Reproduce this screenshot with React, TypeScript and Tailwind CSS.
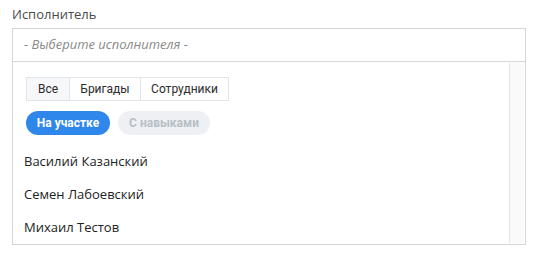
import { useState } from "react";

const tabs = ["Все", "Бригады", "Сотрудники"];
const people = ["Василий Казанский", "Семен Лабоевский", "Михаил Тестов"];

export default function App() {
  const [tab, setTab] = useState(0);
  const [onSite, setOnSite] = useState(true);

  return (
    <div className="w-[541px] h-[268px] bg-white pl-3 pt-[4px] font-['Open_Sans',sans-serif]">
      <div className="text-[13px] leading-[20px] text-[#4a4a4a] mb-[4px]">Исполнитель</div>

      <div className="w-[514px] border border-[#d6d6d6]">
        {/* Input */}
        <div className="h-[33px] border-b border-[#d6d6d6] flex items-center px-[11px]">
          <span className="italic text-[13px] text-[#8a8a8a]">- Выберите исполнителя -</span>
        </div>

        {/* Dropdown */}
        <div className="flex h-[182px]">
          <div className="flex-1 min-w-0">
            <div className="pl-[13px] pt-[13px]">
              <div className="inline-flex border border-[#e1e4e8] font-['Roboto',sans-serif] text-[12px] text-[#2b2b2b]">
                {tabs.map((t, i) => (
                  <button
                    key={t}
                    onClick={() => setTab(i)}
                    className={`h-[22px] flex items-center justify-center ${
                      i === 0 ? "w-[42px]" : i === 1 ? "w-[71px] border-l border-[#e1e4e8]" : "w-[88px] border-l border-[#e1e4e8]"
                    } ${tab === i ? "bg-[#f6f7f9]" : "bg-white"}`}
                  >
                    {t}
                  </button>
                ))}
              </div>

              <div className="flex gap-[8px] mt-[10px] font-['Roboto',sans-serif] text-[12px] font-bold">
                <button
                  onClick={() => setOnSite(true)}
                  className={`h-[24px] w-[84px] rounded-full ${
                    onSite ? "bg-[#2f86eb] text-white" : "bg-[#eef0f3] text-[#b9bfc7]"
                  }`}
                >
                  На участке
                </button>
                <button
                  onClick={() => setOnSite(false)}
                  className={`h-[24px] w-[92px] rounded-full ${
                    !onSite ? "bg-[#2f86eb] text-white" : "bg-[#eef0f3] text-[#b9bfc7]"
                  }`}
                >
                  С навыками
                </button>
              </div>
            </div>

            <div className="mt-[10px]">
              {people.map((p) => (
                <div key={p} className="h-[33px] flex items-center px-[11px] text-[13px] text-[#222]">
                  {p}
                </div>
              ))}
            </div>
          </div>

          {/* Scrollbar track */}
          <div className="w-[15px] mt-[1px] mb-[1px] mr-[1px] bg-[#fafafa] border-l border-[#e4e4e4]" />
        </div>
      </div>
    </div>
  );
}
